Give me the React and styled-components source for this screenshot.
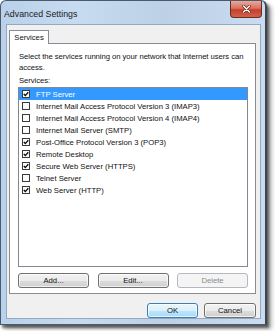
import React from "react";
import styled, { createGlobalStyle } from "styled-components";

const Global = createGlobalStyle`
  html, body { margin: 0; padding: 0; background: #ffffff; }
  body { font-family: "Liberation Sans", Arial, sans-serif; }
`;

const Page = styled.div`
  width: 275px;
  height: 331px;
  display: flex;
  align-items: flex-start;
  justify-content: flex-start;
  overflow: hidden;
`;

const Window = styled.div`
  box-sizing: border-box;
  width: 267px;
  height: 325px;
  display: flex;
  flex-direction: column;
  border: 1px solid #4a5a6c;
  border-right: 2px solid #3a4652;
  border-radius: 6px 6px 0 0;
  background: linear-gradient(90deg, #b9d1ea 0%, #c7dbf0 30%, #bcd0e6 60%, #c9dcf0 100%);
  box-shadow: 2px 3px 3px rgba(0, 0, 0, 0.55), 5px 4px 4px rgba(0, 0, 0, 0.25);
  padding: 0 4px 5px 5px;
`;

const TitleBar = styled.div`
  height: 23px;
  display: flex;
  align-items: center;
  justify-content: space-between;
`;

const Title = styled.span`
  font-size: 8.8px;
  color: #1a1a1a;
  margin-top: 3px;
  margin-left: -2px;
`;

const CloseButton = styled.div`
  align-self: flex-start;
  width: 32px;
  height: 17px;
  margin-right: -1px;
  box-sizing: border-box;
  border: 1px solid #6b2a22;
  border-top: none;
  border-radius: 0 0 4px 4px;
  background: linear-gradient(180deg, #e8a99c 0%, #d9725f 45%, #c4412c 55%, #d3604a 100%);
  display: flex;
  align-items: center;
  justify-content: center;
`;

const Client = styled.div`
  flex: 1;
  box-sizing: border-box;
  background: #f0f0f0;
  border: 1px solid #94a9c0;
  padding: 5px 4px 0 2px;
  display: flex;
  flex-direction: column;
`;

const TabStrip = styled.div`
  display: flex;
  position: relative;
  z-index: 1;
  margin-bottom: -1px;
`;

const Tab = styled.div`
  box-sizing: border-box;
  width: 40px;
  height: 14px;
  border: 1px solid #898c95;
  border-bottom: none;
  background: #ffffff;
  font-size: 7.7px;
  color: #111;
  display: flex;
  align-items: center;
  justify-content: center;
`;

const Panel = styled.div`
  box-sizing: border-box;
  height: 251px;
  background: #ffffff;
  border: 1px solid #898c95;
  padding: 7px 7px 4px 8px;
  display: flex;
  flex-direction: column;
`;

const Text = styled.div`
  font-size: 7.7px;
  line-height: 11px;
  letter-spacing: -0.05px;
  color: #111;
  padding-left: 1px;
  margin-top: ${(p) => p.$mt || 0}px;
`;

const ListBox = styled.div`
  box-sizing: border-box;
  height: 180px;
  margin-top: 1px;
  border: 1px solid #828790;
  background: #ffffff;
  display: flex;
  flex-direction: column;
`;

const Row = styled.div`
  height: 12px;
  display: flex;
  align-items: center;
  gap: 6px;
  padding-left: 3px;
  font-size: 7.7px;
  color: ${(p) => (p.$selected ? "#ffffff" : "#111111")};
  background: ${(p) => (p.$selected ? "#3399ff" : "transparent")};
`;

const ButtonRow = styled.div`
  display: flex;
  justify-content: space-between;
  margin-top: 6px;
`;

const Button = styled.div`
  box-sizing: border-box;
  width: ${(p) => p.$w}px;
  height: 15px;
  border: 1px solid ${(p) => (p.$disabled ? "#b5b9bd" : p.$default ? "#3c7fb1" : "#707070")};
  border-radius: 3px;
  background: ${(p) =>
    p.$disabled
      ? "#f4f4f4"
      : p.$default
      ? "linear-gradient(180deg, #eaf6fd 0%, #d9f0fc 50%, #bee6fd 51%, #a7d9f5 100%)"
      : "linear-gradient(180deg, #f2f2f2 0%, #ebebeb 50%, #dddddd 51%, #cfcfcf 100%)"};
  box-shadow: inset 0 0 0 1px ${(p) => (p.$disabled ? "transparent" : "rgba(255,255,255,0.7)")};
  font-size: 7.7px;
  color: ${(p) => (p.$disabled ? "#8c8c8c" : "#111")};
  display: flex;
  align-items: center;
  justify-content: center;
`;

const Footer = styled.div`
  display: flex;
  justify-content: flex-end;
  gap: 6px;
  margin-top: 9px;
`;

const Check = ({ checked }) => (
  <svg width="8" height="8" viewBox="0 0 8 8" style={{ flex: "none" }}>
    <rect x="0.5" y="0.5" width="7" height="7" fill="#fafafa" stroke="#3a3a3a" strokeWidth="1" />
    {checked && <path d="M1.8 4.1 L3.3 5.6 L6.3 2.3" fill="none" stroke="#111" strokeWidth="1.4" />}
  </svg>
);

const services = [
  { label: "FTP Server", checked: true, selected: true },
  { label: "Internet Mail Access Protocol Version 3 (IMAP3)", checked: false },
  { label: "Internet Mail Access Protocol Version 4 (IMAP4)", checked: false },
  { label: "Internet Mail Server (SMTP)", checked: false },
  { label: "Post-Office Protocol Version 3 (POP3)", checked: true },
  { label: "Remote Desktop", checked: true },
  { label: "Secure Web Server (HTTPS)", checked: true },
  { label: "Telnet Server", checked: false },
  { label: "Web Server (HTTP)", checked: true },
];

export default function App() {
  return (
    <>
      <Global />
      <Page>
        <Window>
          <TitleBar>
            <Title>Advanced Settings</Title>
            <CloseButton>
              <svg width="9" height="8" viewBox="0 0 9 8">
                <path d="M1.5 1 L7.5 7 M7.5 1 L1.5 7" stroke="#5a1a12" strokeWidth="2.6" strokeLinecap="round" />
                <path d="M1.5 1 L7.5 7 M7.5 1 L1.5 7" stroke="#ffffff" strokeWidth="1.5" strokeLinecap="round" />
              </svg>
            </CloseButton>
          </TitleBar>
          <Client>
            <TabStrip>
              <Tab>Services</Tab>
            </TabStrip>
            <Panel>
              <Text>Select the services running on your network that Internet users can access.</Text>
              <Text $mt={2}>Services:</Text>
              <ListBox>
                {services.map((s) => (
                  <Row key={s.label} $selected={s.selected}>
                    <Check checked={s.checked} />
                    <span>{s.label}</span>
                  </Row>
                ))}
              </ListBox>
              <ButtonRow>
                <Button $w={71}>Add...</Button>
                <Button $w={71}>Edit...</Button>
                <Button $w={71} $disabled>Delete</Button>
              </ButtonRow>
            </Panel>
            <Footer>
              <Button $w={51} $default>OK</Button>
              <Button $w={52}>Cancel</Button>
            </Footer>
          </Client>
        </Window>
      </Page>
    </>
  );
}
